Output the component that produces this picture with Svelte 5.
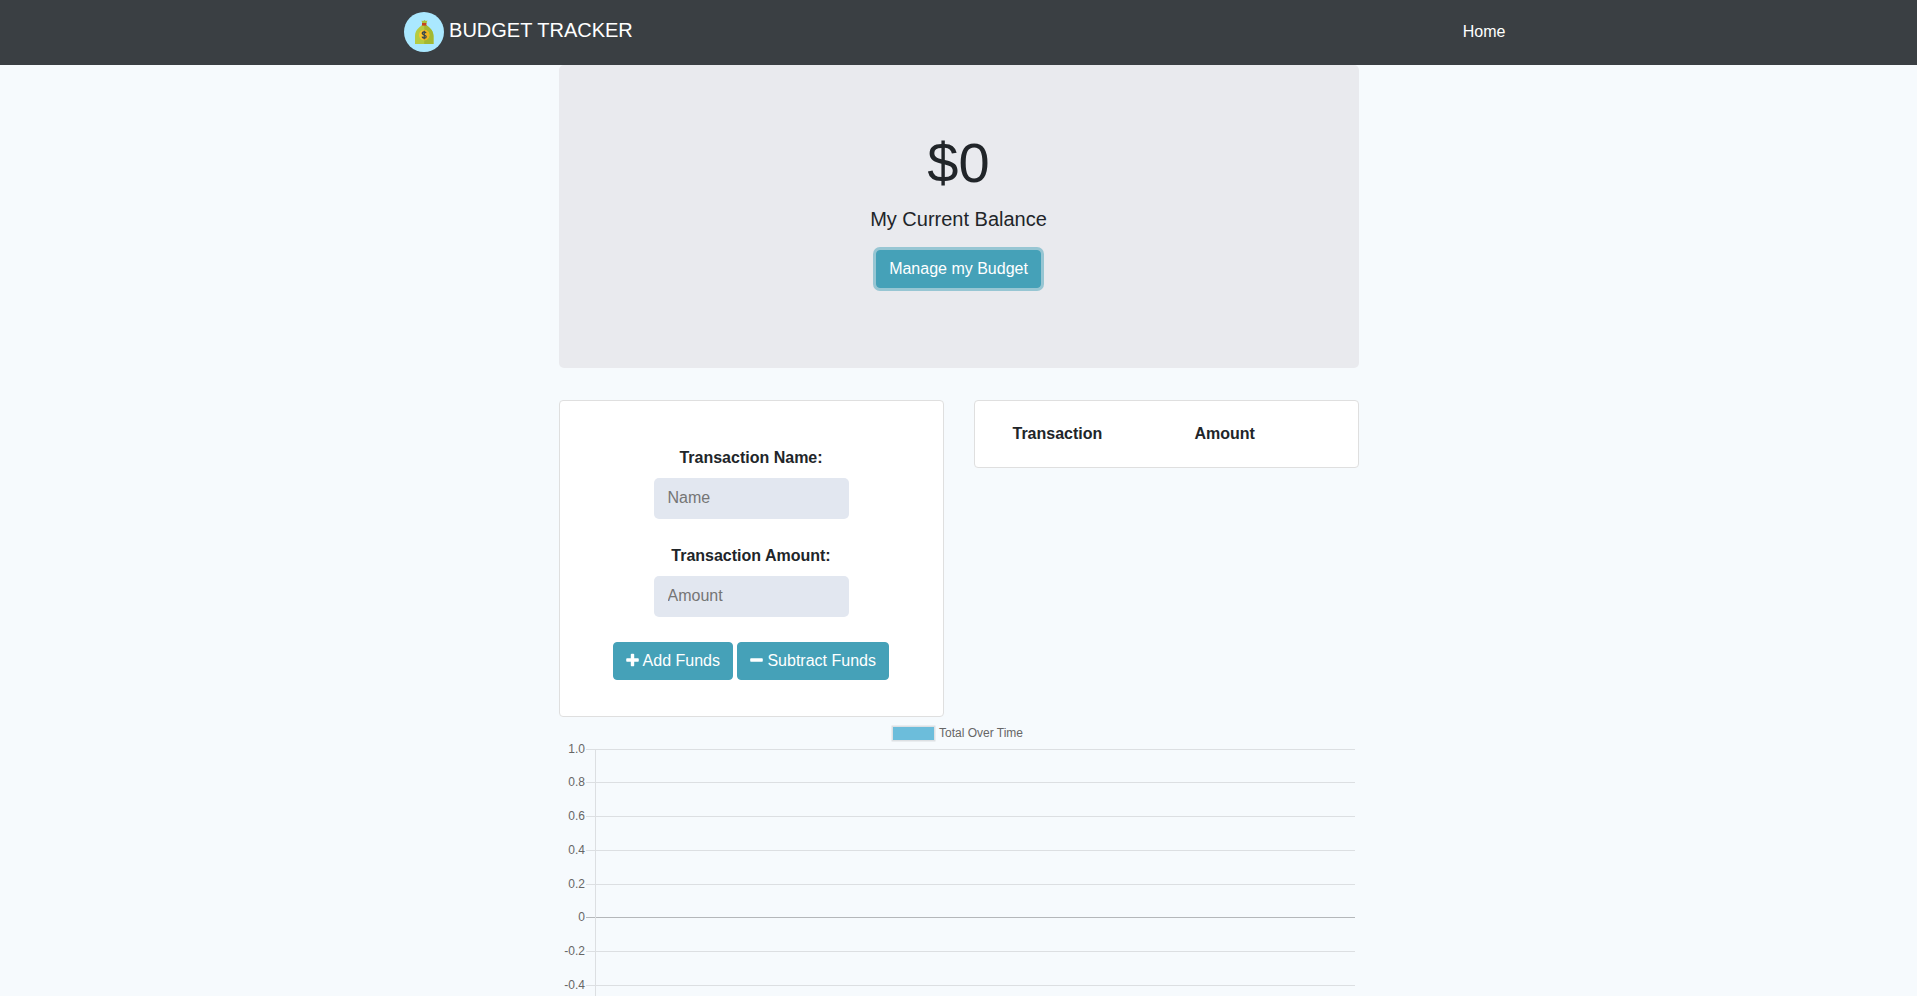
<script>
  let name = $state('');
  let amount = $state('');
  let transactions = $state([]);

  const total = $derived(transactions.reduce((sum, t) => sum + t.value, 0));

  function send(sign) {
    if (name === '' || amount === '') return;
    transactions = [{ name, value: Number(amount) * sign }, ...transactions];
    name = '';
    amount = '';
  }

  const ticks = ['1.0', '0.8', '0.6', '0.4', '0.2', '0', '-0.2', '-0.4', '-0.6', '-0.8', '-1.0'];
  const chartTop = 32;
  const tickY = (i) => chartTop + Math.round(i * 33.7 - 0.3) + 0.5;
</script>

<nav class="navbar">
  <div class="nav-inner">
    <a class="brand" href="/">
      <svg class="logo" viewBox="0 0 40 40" aria-hidden="true">
        <circle cx="20" cy="20" r="20" fill="#aae8ff" />
        <path d="M18 13h4.400c1.500 1.600 7.100 4.500 7.100 11v8h-18.500v-8c0-6.500 5.500-9.400 7-11z" fill="#b5cb41" />
        <path d="M20.200 13h2.200c1.500 1.600 7.100 4.500 7.100 11v8h-9.300z" fill="#a3b832" />
        <path d="M17.500 8.500l1.600.5 1.400-.9 1.400.9 1.500-.5-.9 3h-4.200z" fill="#a9bf3b" />
        <rect x="18" y="11" width="4.400" height="2.600" fill="#c5431f" />
        <circle cx="20.200" cy="23" r="5.200" fill="#fbc62c" />
        <path d="M20.200 17.800a5.200 5.200 0 0 1 0 10.400z" fill="#eeb51f" />
        <path d="M22 21.200c-.2-1-.9-1.400-1.900-1.400-1.100 0-1.900.6-1.900 1.500 0 2.200 4 1.200 4 3.400 0 .9-.9 1.500-2 1.500s-1.900-.5-2.100-1.500M20.200 18.800v8.400" fill="none" stroke="#36454f" stroke-width="1.300" />
      </svg>
      BUDGET TRACKER
    </a>
    <a class="nav-link" href="/">Home</a>
  </div>
</nav>

<main class="page">
  <section class="jumbotron">
    <h1>${total}</h1>
    <p class="lead">My Current Balance</p>
    <button class="btn focused" type="button">Manage my Budget</button>
  </section>

  <div class="columns">
    <form class="card form" onsubmit={(e) => e.preventDefault()}>
      <div class="field">
        <label for="t-name">Transaction Name:</label>
        <input id="t-name" type="text" placeholder="Name" bind:value={name} />
      </div>
      <div class="field">
        <label for="t-amount">Transaction Amount:</label>
        <input id="t-amount" type="text" inputmode="decimal" placeholder="Amount" bind:value={amount} />
      </div>
      <div class="actions">
        <button class="btn" type="button" onclick={() => send(1)}>
          <svg class="icon" viewBox="192 -64 1408 1792" aria-hidden="true"><path d="M1600 736v192q0 40-28 68t-68 28h-416v416q0 40-28 68t-68 28h-192q-40 0-68-28t-28-68v-416h-416q-40 0-68-28t-28-68v-192q0-40 28-68t68-28h416v-416q0-40 28-68t68-28h192q40 0 68 28t28 68v416h416q40 0 68 28t28 68z" /></svg>
          Add Funds
        </button>
        <button class="btn" type="button" onclick={() => send(-1)}>
          <svg class="icon" viewBox="192 -64 1408 1792" aria-hidden="true"><path d="M1600 736v192q0 40-28 68t-68 28h-1216q-40 0-68-28t-28-68v-192q0-40 28-68t68-28h1216q40 0 68 28t28 68z" /></svg>
          Subtract Funds
        </button>
      </div>
    </form>

    <div class="card list">
      <table>
        <thead>
          <tr><th class="first">Transaction</th><th>Amount</th></tr>
        </thead>
        <tbody>
          {#each transactions as t}
            <tr><td>{t.name}</td><td>{t.value}</td></tr>
          {/each}
        </tbody>
      </table>
    </div>
  </div>

  <svg class="chart" viewBox="0 0 800 400" role="img" aria-label="Total Over Time">
    <rect x="334" y="10" width="41" height="13" fill="none" stroke="#000" stroke-opacity="0.1" stroke-width="3" />
    <rect x="334" y="10" width="41" height="13" fill="#6cbddb" />
    <text x="380" y="20">Total Over Time</text>
    {#each ticks as label, i}
      <text x="26" y={tickY(i) + 3.5} text-anchor="end">{label}</text>
      <line x1="27" x2="796" y1={tickY(i)} y2={tickY(i)} class:zero={label === '0'} />
    {/each}
    <line x1="36.5" x2="36.5" y1="32" y2="369" />
  </svg>
</main>

<style>
  :global(body) {
    margin: 0;
    background: #f6fafd;
    color: #212529;
    font: 16px/24px "Liberation Sans", Arial, sans-serif;
  }

  .navbar {
    background: #3a3f43;
    padding: 8px 0 9px;
  }

  .nav-inner {
    box-sizing: border-box;
    max-width: 1140px;
    margin: 0 auto;
    padding: 0 15px;
    display: flex;
    align-items: center;
    justify-content: space-between;
  }

  .brand {
    padding: 4px 0;
    color: #fff;
    font-size: 20px;
    line-height: 30px;
    text-decoration: none;
    white-space: nowrap;
  }

  .logo {
    width: 40px;
    height: 40px;
    vertical-align: middle;
  }

  .nav-link {
    padding: 8px;
    color: #fff;
    text-decoration: none;
  }

  .page {
    max-width: 800px;
    margin: 0 auto;
  }

  .jumbotron {
    padding: 64px 32px 80px;
    margin-bottom: 32px;
    border-radius: 5px;
    background: #e9eaee;
    text-align: center;
  }

  h1 {
    margin: 0 0 8px;
    font-size: 56px;
    font-weight: 400;
    line-height: 67px;
  }

  .lead {
    margin: 0 0 16px;
    font-size: 20px;
    line-height: 30px;
  }

  .btn {
    padding: 6px 12px;
    border: 1px solid #45a1b8;
    border-radius: 4px;
    background: #45a1b8;
    color: #fff;
    font: inherit;
    white-space: nowrap;
    cursor: pointer;
  }

  .focused {
    box-shadow: 0 0 0 3px rgba(69, 161, 184, 0.5);
  }

  .icon {
    width: 13px;
    height: 16px;
    fill: #fff;
    vertical-align: -2px;
  }

  .columns {
    display: grid;
    grid-template-columns: repeat(auto-fit, minmax(320px, 1fr));
    align-items: start;
    gap: 30px;
  }

  .card {
    border: 1px solid #dfdfdf;
    border-radius: 4px;
    background: #fff;
  }

  .form {
    display: flex;
    flex-direction: column;
    align-items: center;
    gap: 25px;
    padding: 45px 20px 36px;
  }

  .field {
    display: flex;
    flex-direction: column;
    align-items: center;
    gap: 8px;
  }

  label {
    font-weight: 700;
  }

  input {
    box-sizing: border-box;
    width: 195px;
    height: 41px;
    padding: 0 14px 2px;
    border: 0;
    border-radius: 5px;
    background: #e2e7f0;
    color: #212529;
    font: inherit;
  }

  input::placeholder {
    color: #757575;
    opacity: 1;
  }

  .actions {
    display: flex;
    flex-wrap: wrap;
    justify-content: center;
    gap: 4px;
  }

  .list {
    padding: 9px 27px;
  }

  table {
    width: 100%;
    border-collapse: collapse;
  }

  th,
  td {
    padding: 12px 11px;
    text-align: left;
  }

  .first {
    width: 160px;
  }

  .chart {
    display: block;
    width: 100%;
  }

  .chart text {
    fill: #666;
    font-size: 12px;
  }

  .chart line {
    stroke: #dcdfe2;
    stroke-width: 1px;
    shape-rendering: crispEdges;
  }

  .chart .zero {
    stroke: #b4b7ba;
  }
</style>
